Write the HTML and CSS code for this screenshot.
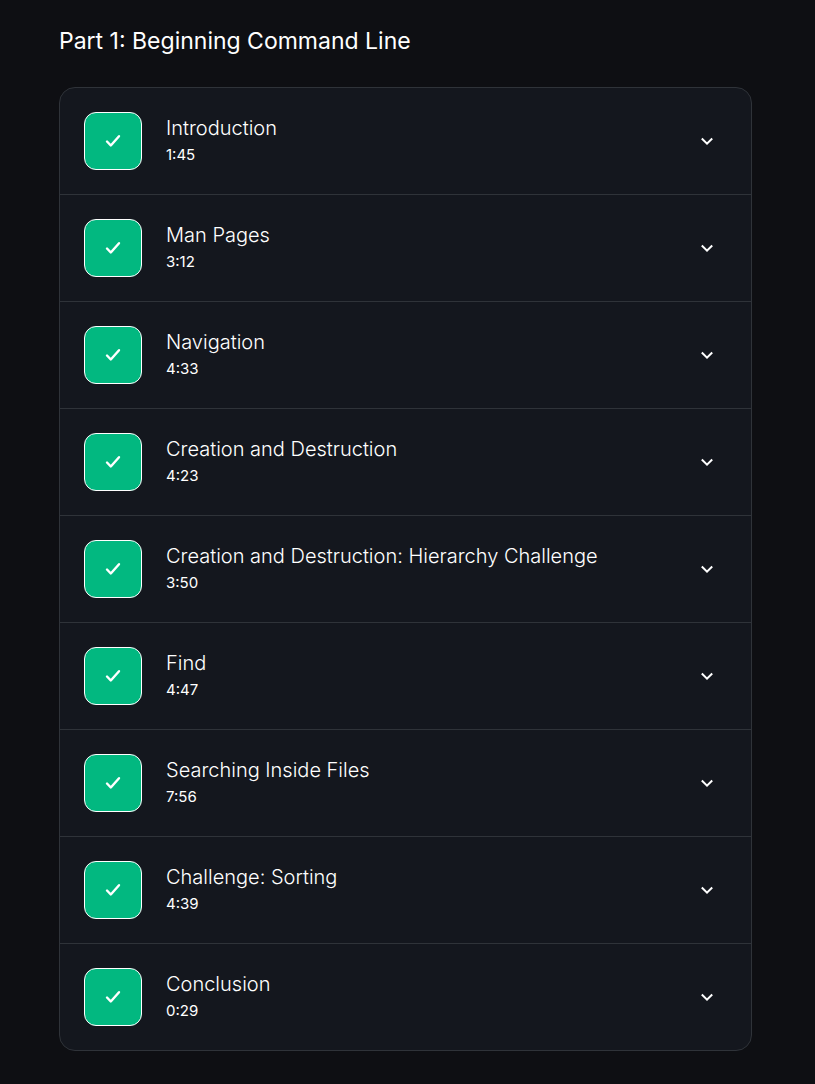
FILE: index.html
```html
<!DOCTYPE html>
<html lang="en">
<head>
<meta charset="utf-8">
<meta name="viewport" content="width=device-width, initial-scale=1">
<title>Part 1: Beginning Command Line</title>
<link rel="stylesheet" href="styles.css">
</head>
<body>
<svg class="sprite" aria-hidden="true">
  <symbol id="check" viewBox="0 0 24 24"><path d="M6 12.5l3.8 4L18 7.2"/></symbol>
  <symbol id="chevron" viewBox="0 0 24 24"><path d="M6.8 9.5l5.2 5.2 5.2-5.2"/></symbol>
</svg>
<main class="course">
  <h1 class="course-title">Part 1: Beginning Command Line</h1>
  <ul class="lessons">
    <li class="lesson"><button class="lesson-toggle" type="button" aria-expanded="false"><span class="status"><svg class="icon icon-check"><use href="#check"/></svg></span><span class="info"><span class="name">Introduction</span><span class="time">1:45</span></span><svg class="icon"><use href="#chevron"/></svg></button></li>
    <li class="lesson"><button class="lesson-toggle" type="button" aria-expanded="false"><span class="status"><svg class="icon icon-check"><use href="#check"/></svg></span><span class="info"><span class="name">Man Pages</span><span class="time">3:12</span></span><svg class="icon"><use href="#chevron"/></svg></button></li>
    <li class="lesson"><button class="lesson-toggle" type="button" aria-expanded="false"><span class="status"><svg class="icon icon-check"><use href="#check"/></svg></span><span class="info"><span class="name">Navigation</span><span class="time">4:33</span></span><svg class="icon"><use href="#chevron"/></svg></button></li>
    <li class="lesson"><button class="lesson-toggle" type="button" aria-expanded="false"><span class="status"><svg class="icon icon-check"><use href="#check"/></svg></span><span class="info"><span class="name">Creation and Destruction</span><span class="time">4:23</span></span><svg class="icon"><use href="#chevron"/></svg></button></li>
    <li class="lesson"><button class="lesson-toggle" type="button" aria-expanded="false"><span class="status"><svg class="icon icon-check"><use href="#check"/></svg></span><span class="info"><span class="name">Creation and Destruction: Hierarchy Challenge</span><span class="time">3:50</span></span><svg class="icon"><use href="#chevron"/></svg></button></li>
    <li class="lesson"><button class="lesson-toggle" type="button" aria-expanded="false"><span class="status"><svg class="icon icon-check"><use href="#check"/></svg></span><span class="info"><span class="name">Find</span><span class="time">4:47</span></span><svg class="icon"><use href="#chevron"/></svg></button></li>
    <li class="lesson"><button class="lesson-toggle" type="button" aria-expanded="false"><span class="status"><svg class="icon icon-check"><use href="#check"/></svg></span><span class="info"><span class="name">Searching Inside Files</span><span class="time">7:56</span></span><svg class="icon"><use href="#chevron"/></svg></button></li>
    <li class="lesson"><button class="lesson-toggle" type="button" aria-expanded="false"><span class="status"><svg class="icon icon-check"><use href="#check"/></svg></span><span class="info"><span class="name">Challenge: Sorting</span><span class="time">4:39</span></span><svg class="icon"><use href="#chevron"/></svg></button></li>
    <li class="lesson"><button class="lesson-toggle" type="button" aria-expanded="false"><span class="status"><svg class="icon icon-check"><use href="#check"/></svg></span><span class="info"><span class="name">Conclusion</span><span class="time">0:29</span></span><svg class="icon"><use href="#chevron"/></svg></button></li>
  </ul>
</main>
</body>
</html>
```
FILE: styles.css
```css
* {
  box-sizing: border-box;
}

body {
  margin: 0;
  background: #0e0f13;
  color: #fff;
  font-family: Inter, "Liberation Sans", sans-serif;
}

.sprite {
  display: none;
}

.course {
  padding: 25px 63px 33px 59px;
}

.course-title {
  margin: 0 0 30px;
  font-size: 23px;
  font-weight: 400;
  line-height: 32px;
}

.lessons {
  margin: 0;
  padding: 0;
  list-style: none;
  background: #14171e;
  border: 1px solid #2f3339;
  border-radius: 16px;
  overflow: hidden;
}

.lesson + .lesson {
  border-top: 1px solid #2f3339;
}

.lesson-toggle {
  display: flex;
  align-items: center;
  gap: 24px;
  width: 100%;
  padding: 24px 32px 24px 24px;
  border: 0;
  background: none;
  color: inherit;
  font: inherit;
  text-align: left;
  cursor: pointer;
}

.status {
  display: flex;
  align-items: center;
  justify-content: center;
  width: 58px;
  height: 58px;
  border: 1px solid #fff;
  border-radius: 12px;
  background: #02b880;
}

.info {
  display: flex;
  flex: 1;
  flex-direction: column;
}

.name {
  font-size: 20px;
  font-weight: 350;
  line-height: 28px;
}

.time {
  font-size: 15px;
  line-height: 26px;
}

.icon {
  width: 24px;
  height: 24px;
  fill: none;
  stroke: #fff;
  stroke-width: 2;
}

.icon-check {
  stroke-width: 2.4;
  stroke-linecap: round;
  stroke-linejoin: round;
}
```
